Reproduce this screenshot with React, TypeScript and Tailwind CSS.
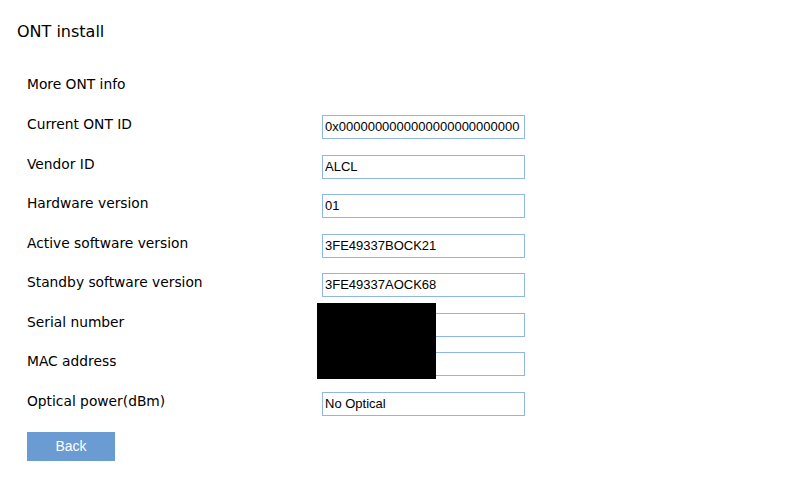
import React from "react";

const rows: [string, string][] = [
  ["Current ONT ID", "0x0000000000000000000000000"],
  ["Vendor ID", "ALCL"],
  ["Hardware version", "01"],
  ["Active software version", "3FE49337BOCK21"],
  ["Standby software version", "3FE49337AOCK68"],
  ["Serial number", ""],
  ["MAC address", ""],
  ["Optical power(dBm)", "No Optical"],
];

export default function App() {
  return (
    <div className="relative w-[800px] h-[483px] bg-white text-black" style={{ fontFamily: '"DejaVu Sans", Verdana, sans-serif' }}>
      <div className="pl-[17px] pt-[22px] text-[16px] leading-[20px]">ONT install</div>
      <div className="pl-[27px] pt-[29px]">
        <div className="h-[40px] pt-[4px] text-[13.8px] leading-[18px]">More ONT info</div>
        {rows.map(([label, value]) => (
          <div key={label} className="h-[39.5px] pt-[4px] flex items-start">
            <div className="w-[295px] text-[13.8px] leading-[18px]">{label}</div>
            <div
              className="w-[203px] h-[24px] border border-[#8fb6ea] px-[2px] overflow-hidden whitespace-nowrap text-[13px] leading-[22px]"
              style={{ fontFamily: '"Liberation Sans", Arial, sans-serif' }}
            >
              {value}
            </div>
          </div>
        ))}
        <button
          className="mt-[4.5px] w-[88px] h-[29px] bg-[#6b9bd3] text-white text-[14px] leading-[29px] text-center"
          style={{ fontFamily: '"Liberation Sans", Arial, sans-serif' }}
        >
          Back
        </button>
      </div>
      <div className="absolute left-[317px] top-[303px] w-[119px] h-[76px] bg-black" />
    </div>
  );
}
